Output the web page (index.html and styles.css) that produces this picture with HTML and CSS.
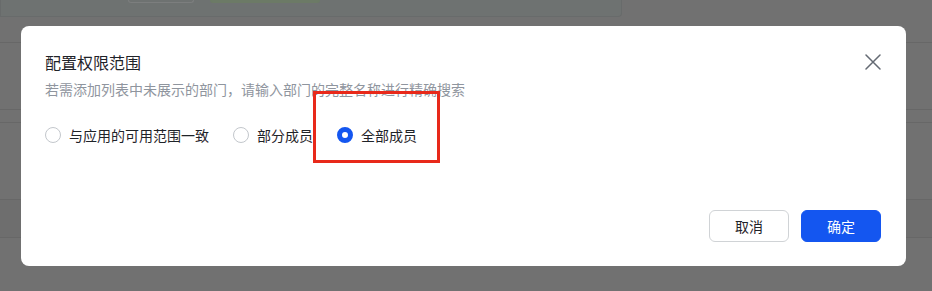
FILE: index.html
```html
<!DOCTYPE html>
<html lang="zh-CN">
<head>
  <meta charset="UTF-8">
  <title>配置权限范围</title>
  <link rel="stylesheet" href="styles.css">
</head>
<body>
  <!-- page behind the mask -->
  <div class="page">
    <div class="top-card">
      <span class="ghost-btn"></span>
      <span class="ghost-btn green"></span>
    </div>
    <div class="row r1"></div>
    <div class="row r2"></div>
    <div class="row r3"></div>
    <div class="row r4"></div>
    <div class="row r5"></div>
  </div>

  <div class="mask">
    <div class="dialog">
      <div class="dialog-head">
        <h2 class="dialog-title">配置权限范围</h2>
        <button class="close-btn" aria-label="关闭">
          <svg width="16" height="16" viewBox="0 0 16 16"><path d="M1 1 L15 15 M15 1 L1 15" stroke="#646a73" stroke-width="1.5" stroke-linecap="round" fill="none"/></svg>
        </button>
      </div>
      <p class="dialog-desc">若需添加列表中未展示的部门，请输入部门的完整名称进行精确搜索</p>

      <div class="radio-group">
        <label class="radio"><span class="dot"></span>与应用的可用范围一致</label>
        <label class="radio"><span class="dot"></span>部分成员</label>
        <label class="radio checked"><span class="dot"></span>全部成员<span class="mark"></span></label>
      </div>

      <div class="dialog-foot">
        <button class="btn">取消</button>
        <button class="btn primary">确定</button>
      </div>
    </div>
  </div>
</body>
</html>
```

FILE: styles.css
```css
* { margin: 0; padding: 0; box-sizing: border-box; }
body { font-family: "Noto Sans CJK SC", "Noto Sans", sans-serif; background: #717171; color: #1f2329; overflow: hidden; width: 932px; height: 291px; position: relative; }

/* background page (already dimmed) */
.page { width: 100%; height: 100%; }
.top-card { width: 622px; height: 17px; background: #6e7271; border: 1px solid #686b6b; border-top: none; border-radius: 0 0 4px 0; display: flex; gap: 16px; padding-left: 127px; }
.ghost-btn { width: 66px; height: 3px; border: 1px solid #7c7e7e; border-top: none; border-radius: 0 0 3px 3px; }
.ghost-btn.green { width: 110px; background: #6c7a66; border-color: #6c7a66; }
.row { border-bottom: 1px solid #676767; }
.r1 { height: 26px; }
.r2 { height: 67px; }
.r3 { height: 13px; }
.r4 { height: 77px; }
.r5 { height: 38px; background: #6e6e6e; }

/* dialog */
.mask { position: absolute; inset: 0; padding: 26px 26px 25px 21px; }
.dialog { width: 885px; height: 240px; background: #fff; border-radius: 8px; padding: 24px; display: flex; flex-direction: column; }
.dialog-head { display: flex; align-items: center; justify-content: space-between; height: 24px; }
.dialog-title { font-size: 16px; font-weight: 400; line-height: 24px; color: #1f2329; }
.close-btn { border: none; background: none; width: 16px; height: 16px; margin-right: 1px; cursor: pointer; display: flex; }
.dialog-desc { margin-top: 4px; font-size: 14px; line-height: 22px; color: #8f959e; }

.radio-group { display: flex; gap: 24px; margin-top: 24px; }
.radio { position: relative; display: flex; align-items: center; gap: 8px; font-size: 14px; line-height: 22px; color: #1f2329; }
.dot { width: 16px; height: 16px; border: 1px solid #c3c7cc; border-radius: 50%; }
.radio.checked .dot { border: 5px solid #1456f0; }
.mark { position: absolute; left: -24px; top: -33px; width: 127px; height: 72px; border: 3px solid #e8291a; }

.dialog-foot { margin-top: auto; display: flex; justify-content: flex-end; gap: 12px; padding-right: 1px; }
.btn { width: 80px; height: 32px; border-radius: 6px; border: 1px solid #d0d3d6; background: #fff; color: #1f2329; font-family: inherit; font-size: 14px; cursor: pointer; }
.btn.primary { background: #1456f0; border-color: #1456f0; color: #fff; }
```
